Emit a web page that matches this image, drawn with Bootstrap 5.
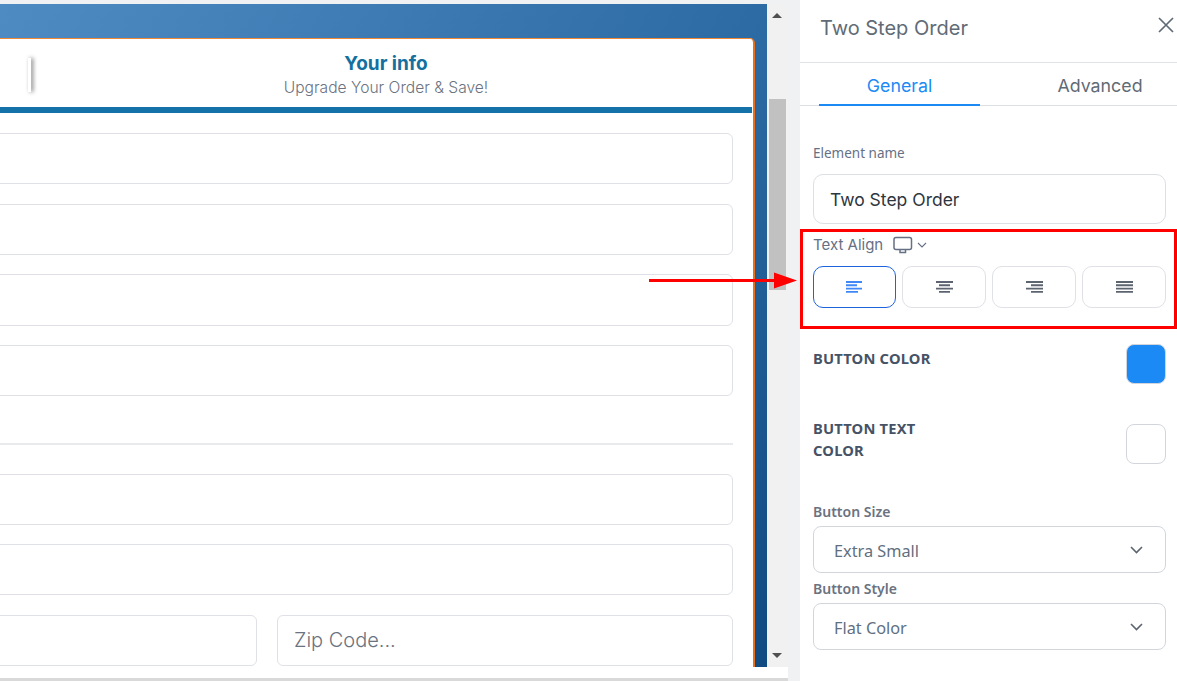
<!DOCTYPE html>
<html lang="en">
<head>
<meta charset="utf-8">
<title>Two Step Order</title>
<link href="https://cdn.jsdelivr.net/npm/bootstrap@5.3.0/dist/css/bootstrap.min.css" rel="stylesheet">
<style>
html,body{height:681px;overflow:hidden}
body{width:1177px;position:relative;background:#f0f1f3;font-family:"Inter","Liberation Sans",sans-serif}
.work-col{width:800px;height:681px;padding-top:4px;flex:none}
.stage{width:788px;height:674px;background:#fff;box-shadow:0 3px 0 #d9d9d9}
.canvas-area{width:767px;height:663px;overflow:hidden;padding-top:34px;background:linear-gradient(118deg,#4f8bc3 0%,#2c6aa3 70%,#0f4a80 100%);flex:none}
.order-card{width:786px;margin-left:-31px;height:640px;background:#fff;border:1px solid #f08a38;border-left:0;border-right:2px solid #e8701a;border-radius:0 5px 0 0}
.step-head{height:68px}
.step-left{width:63px;flex:none}
.step-shade{width:3px;height:34px;margin:19px 0 0 59px;background:#fff;box-shadow:2px 0 4px rgba(0,0,0,.55)}
.step-main{padding-right:13px}
.step-title{font-weight:700;font-size:19px;color:#14709f;line-height:24px;margin-top:13px}
.step-sub{font-size:15.6px;color:#6b7280;line-height:22px;margin-top:1px;font-weight:300}
.step-rule{height:6px;background:#1572a8;width:783px}
.fields{padding:20.3px 20px 0 10px}
.fld{height:51.2px;border:1px solid #dfe1e6;border-radius:6px;background:#fff;font-size:20px;color:#6b7280;padding:0 16px;box-shadow:none}
.fld::placeholder{color:#6b7280;opacity:1;font-weight:300}
.fld-gap{margin-bottom:19.4px}
.fld-rule{height:2px;background:#e9eaee;margin:47px 0 28.5px}
.fld-pair{gap:20px}
.fld-state{width:278px;flex:none}
.fld-zip{width:456px;flex:none}
.fake-scroll{width:21px;height:663px;background:#f1f1f1;position:relative;flex:none}
.scroll-up,.scroll-down{position:absolute;left:5px;width:0;height:0;border-left:5px solid transparent;border-right:5px solid transparent}
.scroll-up{top:9px;border-bottom:5px solid #505050}
.scroll-down{top:649px;border-top:5px solid #505050}
.scroll-thumb{position:absolute;top:95px;left:2px;width:17px;height:191px;background:#c1c1c1}
.side-panel{width:377px;height:681px;background:#fff;flex:none;overflow:hidden}
.side-head{height:63px;border-bottom:1px solid #e1e3e8;padding:0 3px 7px 20px}
.side-title{font-size:20px;color:#5f6b76;font-weight:400;margin:0}
.tabs-row{height:43px;border-bottom:1px solid #dcdfe4;padding-left:19px}
.tab-a,.tab-b{font-size:17.8px;height:43px;line-height:46px;text-align:center;display:block;text-decoration:none;flex:none}
.tab-a{width:161px;color:#1b8af5;border-bottom:2px solid #1b8af5}
.tab-b{width:240px;color:#5f6b76}
.side-body{padding:0 11px 0 13px;font-family:"Noto Sans","Open Sans",sans-serif}
.lab-plain{font-size:13.5px;color:#667085;line-height:18px;margin:38px 0 12px}
.name-in{height:50px;border:1px solid #dcdfe4;border-radius:10px;font-family:"Inter",sans-serif;font-size:17.5px;color:#2d3540;padding:0 16px;box-shadow:none}
.align-lab{font-family:"Inter",sans-serif;font-size:15px;color:#667085;height:20px;margin-top:11px;margin-bottom:11px;gap:10px}
.align-btn{width:84px;height:42px;padding:0;border:1px solid #dfe1e6;border-radius:10px;background:#fff;display:flex;align-items:center;justify-content:center}
.align-btn.on{border-color:#1d63dc;width:83px}
.align-gap{gap:6px}
.cap{font-size:14.7px;font-weight:700;color:#465266;line-height:22px;letter-spacing:.2px}
.cap-one{margin-top:3px}
.cap-two{margin-top:-7px}
.swatch{width:40px;height:40px;border:1px solid #d2d6dc;border-radius:8px;background:#fff;flex:none}
.swatch.blue{background:#1b8af5}
.color-row-a{margin-top:36px;height:40px}
.color-row-b{margin-top:40px;height:40px}
.sel-lab{font-size:14px;font-weight:600;color:#6b7280;line-height:18px;margin-bottom:5px}
.sel-lab-a{margin-top:39px}
.sel-lab-b{margin-top:7px}
.sel{height:47px;border:1px solid #d2d6dc;border-radius:8px;color:#5f6f80;font-size:16.3px;padding:0 22px 0 20px}
.sel-text{padding-top:3px}
.mark-box{position:absolute;left:800px;top:229px;width:377px;height:100px;border:3px solid #f00;pointer-events:none}
.mark-arrow{position:absolute;left:648px;top:268px}
.close-x{position:absolute;left:1157px;top:16px}
</style>
</head>
<body class="d-flex">
<div class="work-col">
  <div class="stage">
    <div class="d-flex">
      <div class="canvas-area">
        <div class="order-card">
          <div class="step-head d-flex">
            <div class="step-left"><div class="step-shade"></div></div>
            <div class="step-main flex-grow-1 text-center">
              <div class="step-title">Your info</div>
              <div class="step-sub">Upgrade Your Order &amp; Save!</div>
            </div>
          </div>
          <div class="step-rule"></div>
          <div class="fields">
            <input class="form-control fld fld-gap" aria-label="First name">
            <input class="form-control fld fld-gap" aria-label="Last name">
            <input class="form-control fld fld-gap" aria-label="Email">
            <input class="form-control fld" aria-label="Phone">
            <div class="fld-rule"></div>
            <input class="form-control fld fld-gap" aria-label="Address">
            <input class="form-control fld fld-gap" aria-label="City">
            <div class="d-flex fld-pair">
              <input class="form-control fld fld-state" aria-label="State">
              <input class="form-control fld fld-zip" placeholder="Zip Code...">
            </div>
          </div>
        </div>
      </div>
      <div class="fake-scroll">
        <span class="scroll-up"></span><span class="scroll-thumb"></span><span class="scroll-down"></span>
      </div>
    </div>
  </div>
</div>
<aside class="side-panel">
  <div class="side-head d-flex align-items-center"><h2 class="side-title">Two Step Order</h2></div>
  <div class="tabs-row d-flex">
    <a class="tab-a" href="#">General</a>
    <a class="tab-b" href="#">Advanced</a>
  </div>
  <div class="side-body">
    <div class="lab-plain">Element name</div>
    <input class="form-control name-in" value="Two Step Order" aria-label="Element name">
    <div class="align-lab d-flex align-items-center">
      <span>Text Align</span>
      <svg width="36" height="18" viewBox="0 0 36 18" fill="none" stroke="#667085" stroke-width="1.5">
        <rect x="1" y="1.500" width="17.500" height="12" rx="2"/>
        <path d="M7 13.500v3h5.500v-3"/>
        <path d="M25 7l4 4 4-4" stroke-width="1.100"/>
      </svg>
    </div>
    <div class="d-flex align-gap">
      <button class="align-btn on" aria-label="Left"><svg width="17" height="12" viewBox="0 0 17 12" stroke="#3f88f5" stroke-width="1.9"><path d="M0 1h16M0 4.300h11M0 7.600h16M0 10.900h12"/></svg></button>
      <button class="align-btn" aria-label="Center"><svg width="17" height="12" viewBox="0 0 17 12" stroke="#5c6470" stroke-width="1.9"><path d="M0 1h17M3 4.300h11M0 7.600h17M3 10.900h11"/></svg></button>
      <button class="align-btn" aria-label="Right"><svg width="17" height="12" viewBox="0 0 17 12" stroke="#5c6470" stroke-width="1.9"><path d="M0 1h17M5 4.300h12M0 7.600h17M5 10.900h12"/></svg></button>
      <button class="align-btn" aria-label="Justify"><svg width="17" height="12" viewBox="0 0 17 12" stroke="#5c6470" stroke-width="1.9"><path d="M0 1h17M0 4.300h17M0 7.600h17M0 10.900h17"/></svg></button>
    </div>
    <div class="color-row-a d-flex justify-content-between">
      <div class="cap cap-one">BUTTON COLOR</div><div class="swatch blue"></div>
    </div>
    <div class="color-row-b d-flex justify-content-between">
      <div class="cap cap-two">BUTTON TEXT<br>COLOR</div><div class="swatch"></div>
    </div>
    <div class="sel-lab sel-lab-a">Button Size</div>
    <div class="sel d-flex align-items-center justify-content-between">
      <span class="sel-text">Extra Small</span>
      <svg width="13" height="8" viewBox="0 0 13 8" fill="none" stroke="#5c6470" stroke-width="1.6"><path d="M1 1l5.500 5.500L12 1"/></svg>
    </div>
    <div class="sel-lab sel-lab-b">Button Style</div>
    <div class="sel d-flex align-items-center justify-content-between">
      <span class="sel-text">Flat Color</span>
      <svg width="13" height="8" viewBox="0 0 13 8" fill="none" stroke="#5c6470" stroke-width="1.6"><path d="M1 1l5.500 5.500L12 1"/></svg>
    </div>
  </div>
</aside>
<svg class="close-x" width="18" height="18" viewBox="0 0 18 18" stroke="#5f6b76" stroke-width="1.7" fill="none"><path d="M2 2l14 14M16 2L2 16"/></svg>
<div class="mark-box"></div>
<svg class="mark-arrow" width="150" height="24" viewBox="0 0 150 24"><path d="M1 12.500h126" stroke="#f00" stroke-width="3"/><path d="M126 4.500l23 8-23 8z" fill="#f00"/></svg>
<script src="https://cdn.jsdelivr.net/npm/bootstrap@5.3.0/dist/js/bootstrap.bundle.min.js"></script>
</body>
</html>
